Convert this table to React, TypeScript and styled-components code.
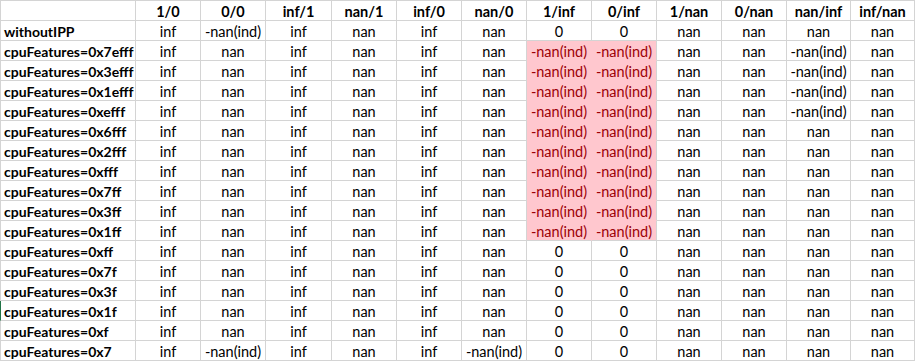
import { Fragment } from 'react'
import styled, { createGlobalStyle } from 'styled-components'

const GlobalStyle = createGlobalStyle`
  html, body {
    margin: 0;
    padding: 0;
    background: #ffffff;
  }
`

const GRID = '#d4d4d4'
const BAD_BG = '#ffc7ce'
const BAD_FG = '#9c0006'

const columns = [
  '1/0', '0/0', 'inf/1', 'nan/1', 'inf/0', 'nan/0',
  '1/inf', '0/inf', '1/nan', '0/nan', 'nan/inf', 'inf/nan',
]

const widths = [136, 65, 65, 66, 65, 65, 65, 65, 65, 65, 65, 64, 64]

const IND = '-nan(ind)'

// every row: label, then the 12 results
const rows: [string, string[]][] = [
  ['withoutIPP', ['inf', IND, 'inf', 'nan', 'inf', 'nan', '0', '0', 'nan', 'nan', 'nan', 'nan']],
  ['cpuFeatures=0x7efff', ['inf', 'nan', 'inf', 'nan', 'inf', 'nan', IND, IND, 'nan', 'nan', IND, 'nan']],
  ['cpuFeatures=0x3efff', ['inf', 'nan', 'inf', 'nan', 'inf', 'nan', IND, IND, 'nan', 'nan', IND, 'nan']],
  ['cpuFeatures=0x1efff', ['inf', 'nan', 'inf', 'nan', 'inf', 'nan', IND, IND, 'nan', 'nan', IND, 'nan']],
  ['cpuFeatures=0xefff', ['inf', 'nan', 'inf', 'nan', 'inf', 'nan', IND, IND, 'nan', 'nan', IND, 'nan']],
  ['cpuFeatures=0x6fff', ['inf', 'nan', 'inf', 'nan', 'inf', 'nan', IND, IND, 'nan', 'nan', 'nan', 'nan']],
  ['cpuFeatures=0x2fff', ['inf', 'nan', 'inf', 'nan', 'inf', 'nan', IND, IND, 'nan', 'nan', 'nan', 'nan']],
  ['cpuFeatures=0xfff', ['inf', 'nan', 'inf', 'nan', 'inf', 'nan', IND, IND, 'nan', 'nan', 'nan', 'nan']],
  ['cpuFeatures=0x7ff', ['inf', 'nan', 'inf', 'nan', 'inf', 'nan', IND, IND, 'nan', 'nan', 'nan', 'nan']],
  ['cpuFeatures=0x3ff', ['inf', 'nan', 'inf', 'nan', 'inf', 'nan', IND, IND, 'nan', 'nan', 'nan', 'nan']],
  ['cpuFeatures=0x1ff', ['inf', 'nan', 'inf', 'nan', 'inf', 'nan', IND, IND, 'nan', 'nan', 'nan', 'nan']],
  ['cpuFeatures=0xff', ['inf', 'nan', 'inf', 'nan', 'inf', 'nan', '0', '0', 'nan', 'nan', 'nan', 'nan']],
  ['cpuFeatures=0x7f', ['inf', 'nan', 'inf', 'nan', 'inf', 'nan', '0', '0', 'nan', 'nan', 'nan', 'nan']],
  ['cpuFeatures=0x3f', ['inf', 'nan', 'inf', 'nan', 'inf', 'nan', '0', '0', 'nan', 'nan', 'nan', 'nan']],
  ['cpuFeatures=0x1f', ['inf', 'nan', 'inf', 'nan', 'inf', 'nan', '0', '0', 'nan', 'nan', 'nan', 'nan']],
  ['cpuFeatures=0xf', ['inf', 'nan', 'inf', 'nan', 'inf', 'nan', '0', '0', 'nan', 'nan', 'nan', 'nan']],
  ['cpuFeatures=0x7', ['inf', IND, 'inf', 'nan', 'inf', IND, '0', '0', 'nan', 'nan', 'nan', 'nan']],
]

// highlighted block: 1/inf and 0/inf for the rows that came out wrong
const isBad = (r: number, c: number) => r >= 1 && r <= 10 && (c === 6 || c === 7)

const Sheet = styled.div`
  display: grid;
  grid-template-columns: ${widths.map((w) => `${w}px`).join(' ')};
  grid-auto-rows: 20px;
  width: max-content;
  border-top: 1px solid ${GRID};
  font-family: Lato, 'Liberation Sans', sans-serif;
  font-size: 14.5px;
  color: #000000;
`

const Cell = styled.div<{ $bold?: boolean; $bad?: boolean; $joinRight?: boolean; $joinDown?: boolean }>`
  box-sizing: border-box;
  padding: 1px 0 0;
  line-height: 19px;
  text-align: center;
  white-space: nowrap;
  overflow: hidden;
  font-weight: ${(p) => (p.$bold ? 700 : 400)};
  background: ${(p) => (p.$bad ? BAD_BG : 'transparent')};
  color: ${(p) => (p.$bad ? BAD_FG : 'inherit')};
  border-right: 1px solid ${(p) => (p.$joinRight ? BAD_BG : GRID)};
  border-bottom: 1px solid ${(p) => (p.$joinDown ? BAD_BG : GRID)};
`

const LabelCell = styled(Cell)<{ $active?: boolean }>`
  text-align: left;
  padding-left: 3px;
  font-size: 14px;
  border-left: 1px solid ${(p) => (p.$active ? '#217346' : GRID)};
`

export default function App() {
  return (
    <>
      <GlobalStyle />
      <Sheet>
        <LabelCell $bold />
        {columns.map((c) => (
          <Cell key={c} $bold>
            {c}
          </Cell>
        ))}
        {rows.map(([label, values], r) => (
          <Fragment key={label}>
            <LabelCell $bold $active={label === 'cpuFeatures=0x1f'}>
              {label}
            </LabelCell>
            {values.map((v, c) => (
              <Cell
                key={c}
                $bad={isBad(r, c)}
                $joinRight={isBad(r, c) && isBad(r, c + 1)}
                $joinDown={isBad(r, c) && isBad(r + 1, c)}
              >
                {v}
              </Cell>
            ))}
          </Fragment>
        ))}
      </Sheet>
    </>
  )
}
